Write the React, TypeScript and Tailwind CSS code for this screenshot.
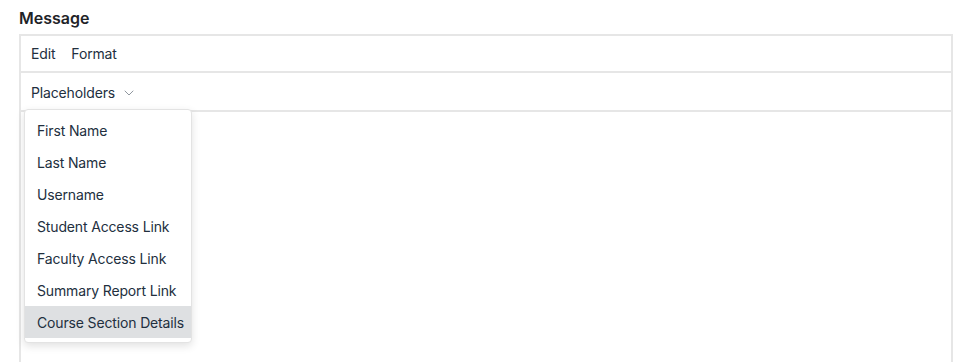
import { ChevronDown } from "lucide-react";

const placeholders = [
  "First Name",
  "Last Name",
  "Username",
  "Student Access Link",
  "Faculty Access Link",
  "Summary Report Link",
  "Course Section Details",
];

export default function App() {
  const active = "Course Section Details";

  return (
    <div className="h-[362px] overflow-hidden bg-white pl-[19px] pr-[22px] pt-[9px] font-['Inter','Noto_Sans',sans-serif] text-[#222f3e]">
      {/* ラベル */}
      <div className="mb-[6px] text-[16px] font-semibold leading-[19px] text-[#1f2328]">
        Message
      </div>

      {/* エディタ枠 */}
      <div className="border-2 border-b-0 border-[#e6e6e6] tracking-[-0.15px]">
        {/* メニューバー */}
        <div className="flex h-[37px] items-center gap-[16px] border-b-2 border-[#e6e6e6] pl-[10px] text-[14px]">
          <span>Edit</span>
          <span>Format</span>
        </div>

        {/* ツールバー */}
        <div className="relative flex h-[39px] items-center border-b-2 border-[#e6e6e6] pl-[10px] pt-[2px] text-[14px]">
          <span>Placeholders</span>
          <ChevronDown className="ml-[6px] h-[16px] w-[16px] text-[#7a828c]" strokeWidth={1.25} />

          {/* ドロップダウン */}
          <div className="absolute left-[3px] top-[36px] z-10 w-[168px] rounded-[4px] border border-[#e3e3e3] bg-white py-[4px] shadow-[0_3px_8px_rgba(0,0,0,0.12)]">
            {placeholders.map((p) => (
              <div
                key={p}
                className={
                  p === active
                    ? "flex h-[32px] items-center bg-[#dee0e2] pl-[12px] text-[14px]"
                    : "flex h-[32px] items-center pl-[12px] text-[14px]"
                }
              >
                {p}
              </div>
            ))}
          </div>
        </div>

        {/* 本文エリア */}
        <div className="h-[300px]" />
      </div>
    </div>
  );
}
